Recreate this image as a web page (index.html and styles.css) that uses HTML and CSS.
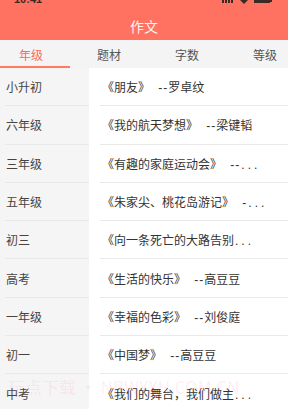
FILE: index.html
```html
<!DOCTYPE html>
<html lang="zh">
<head>
<meta charset="utf-8">
<link rel="stylesheet" href="styles.css">
</head>
<body>
<div class="app">
  <header class="header">
    <div class="status">
      <span class="time">10:41</span>
      <span class="status-icons">
        <svg width="12" height="4" viewBox="0 0 12 4"><rect x="0" y="0" width="2" height="3" fill="#3a2a26"/><rect x="3" y="0" width="2" height="3" fill="#3a2a26"/><rect x="6" y="0" width="2" height="3" fill="#3a2a26"/><rect x="9" y="0" width="2" height="3" fill="#3a2a26"/></svg>
        <svg width="8" height="4" viewBox="0 0 8 4"><path d="M0 0 L8 0 L4 4 Z" fill="#3a2a26"/></svg>
        <svg width="18" height="4" viewBox="0 0 18 4"><rect x="0" y="0" width="16" height="3" fill="#3a2a26"/><rect x="16" y="0" width="2" height="2" fill="#3a2a26"/></svg>
      </span>
    </div>
    <div class="title">作文</div>
  </header>
  <nav class="tabs">
    <div class="tabs-inner">
      <div class="tab active">年级</div>
      <div class="tab">题材</div>
      <div class="tab">字数</div>
      <div class="tab">等级</div>
    </div>
  </nav>
  <main class="content">
    <ul class="cats">
      <li class="cat">小升初</li>
      <li class="cat">六年级</li>
      <li class="cat">三年级</li>
      <li class="cat">五年级</li>
      <li class="cat">初三</li>
      <li class="cat">高考</li>
      <li class="cat">一年级</li>
      <li class="cat">初一</li>
      <li class="cat">中考</li>
    </ul>
    <ul class="list">
      <li class="item"><span class="t">《朋友》<span class="lat"> --</span>罗卓纹</span></li>
      <li class="item"><span class="t">《我的航天梦想》<span class="lat"> --</span>梁键韬</span></li>
      <li class="item"><span class="t">《有趣的家庭运动会》<span class="lat"> --</span><span class="dots">...</span></span></li>
      <li class="item"><span class="t">《朱家尖、桃花岛游记》<span class="lat"> -</span><span class="dots">...</span></span></li>
      <li class="item"><span class="t">《向一条死亡的大路告别<span class="dots">...</span></span></li>
      <li class="item"><span class="t">《生活的快乐》<span class="lat"> --</span>高豆豆</span></li>
      <li class="item"><span class="t">《幸福的色彩》<span class="lat"> --</span>刘俊庭</span></li>
      <li class="item"><span class="t">《中国梦》<span class="lat"> --</span>高豆豆</span></li>
      <li class="item"><span class="t">《我们的舞台，我们做主<span class="dots">...</span></span></li>
    </ul>
  </main>
  <div class="watermark">玩点下载 • NBWYXH.COM.CN</div>
</div>
</body>
</html>
```

FILE: styles.css
```css
* { box-sizing: border-box; margin: 0; padding: 0; }
html, body { width: 288px; height: 409px; overflow: hidden; }
body {
  font-family: "Noto Sans CJK SC", "Noto Sans", sans-serif;
  background: #ffffff;
  color: #333333;
}
.app { position: relative; width: 288px; height: 409px; overflow: hidden; }
.header {
  background: #ff7161;
  height: 40px;
  display: flex;
  flex-direction: column;
}
.status {
  height: 8px;
  margin-top: -5px;
  display: flex;
  justify-content: space-between;
  align-items: flex-start;
  padding: 0 16px 0 14px;
}
.time {
  font-family: "Liberation Sans", sans-serif;
  font-weight: bold;
  font-size: 11px;
  line-height: 8px;
  color: #3a2a26;
}
.status-icons { display: flex; gap: 6px; padding-top: 5px; }
.title {
  flex: 1;
  display: flex;
  align-items: center;
  justify-content: center;
  color: #fff3ef;
  font-size: 14px;
  padding-top: 9px;
}
.tabs {
  height: 28px;
  background: #f4f4f4;
  overflow: hidden;
}
.tabs-inner {
  display: flex;
  margin-left: -8px;
  height: 100%;
}
.tab {
  flex: 0 0 78px;
  display: flex;
  align-items: center;
  justify-content: center;
  font-size: 12px;
  color: #555555;
  border-bottom: 2px solid transparent;
  padding-top: 2px;
}
.tab.active { color: #ff6a50; border-bottom-color: #ff7a5e; }
.content { display: flex; height: 341px; }
.cats {
  list-style: none;
  width: 89px;
  background: #f5f5f5;
  padding-left: 5px;
}
.cat, .item {
  height: 38.3px;
  display: flex;
  align-items: center;
  font-size: 12px;
  border-bottom: 1px solid #e9e9e9;
  white-space: nowrap;
  overflow: hidden;
}
.cat { color: #444444; padding-left: 1px; }
.list {
  list-style: none;
  flex: 1;
  padding-left: 11px;
  background: #ffffff;
}
.item { color: #333333; padding-left: 2px; }
.t { white-space: pre; }
.lat {
  font-family: "Liberation Sans", sans-serif;
  letter-spacing: 1px;
  padding-left: 4px;
}
.dots {
  font-family: "Liberation Sans", sans-serif;
  letter-spacing: 3px;
  padding-left: 1px;
}
.watermark {
  position: absolute;
  left: 8px;
  top: 374px;
  font-size: 17px;
  color: rgba(255, 80, 160, 0.11);
  white-space: nowrap;
  pointer-events: none;
}
```
